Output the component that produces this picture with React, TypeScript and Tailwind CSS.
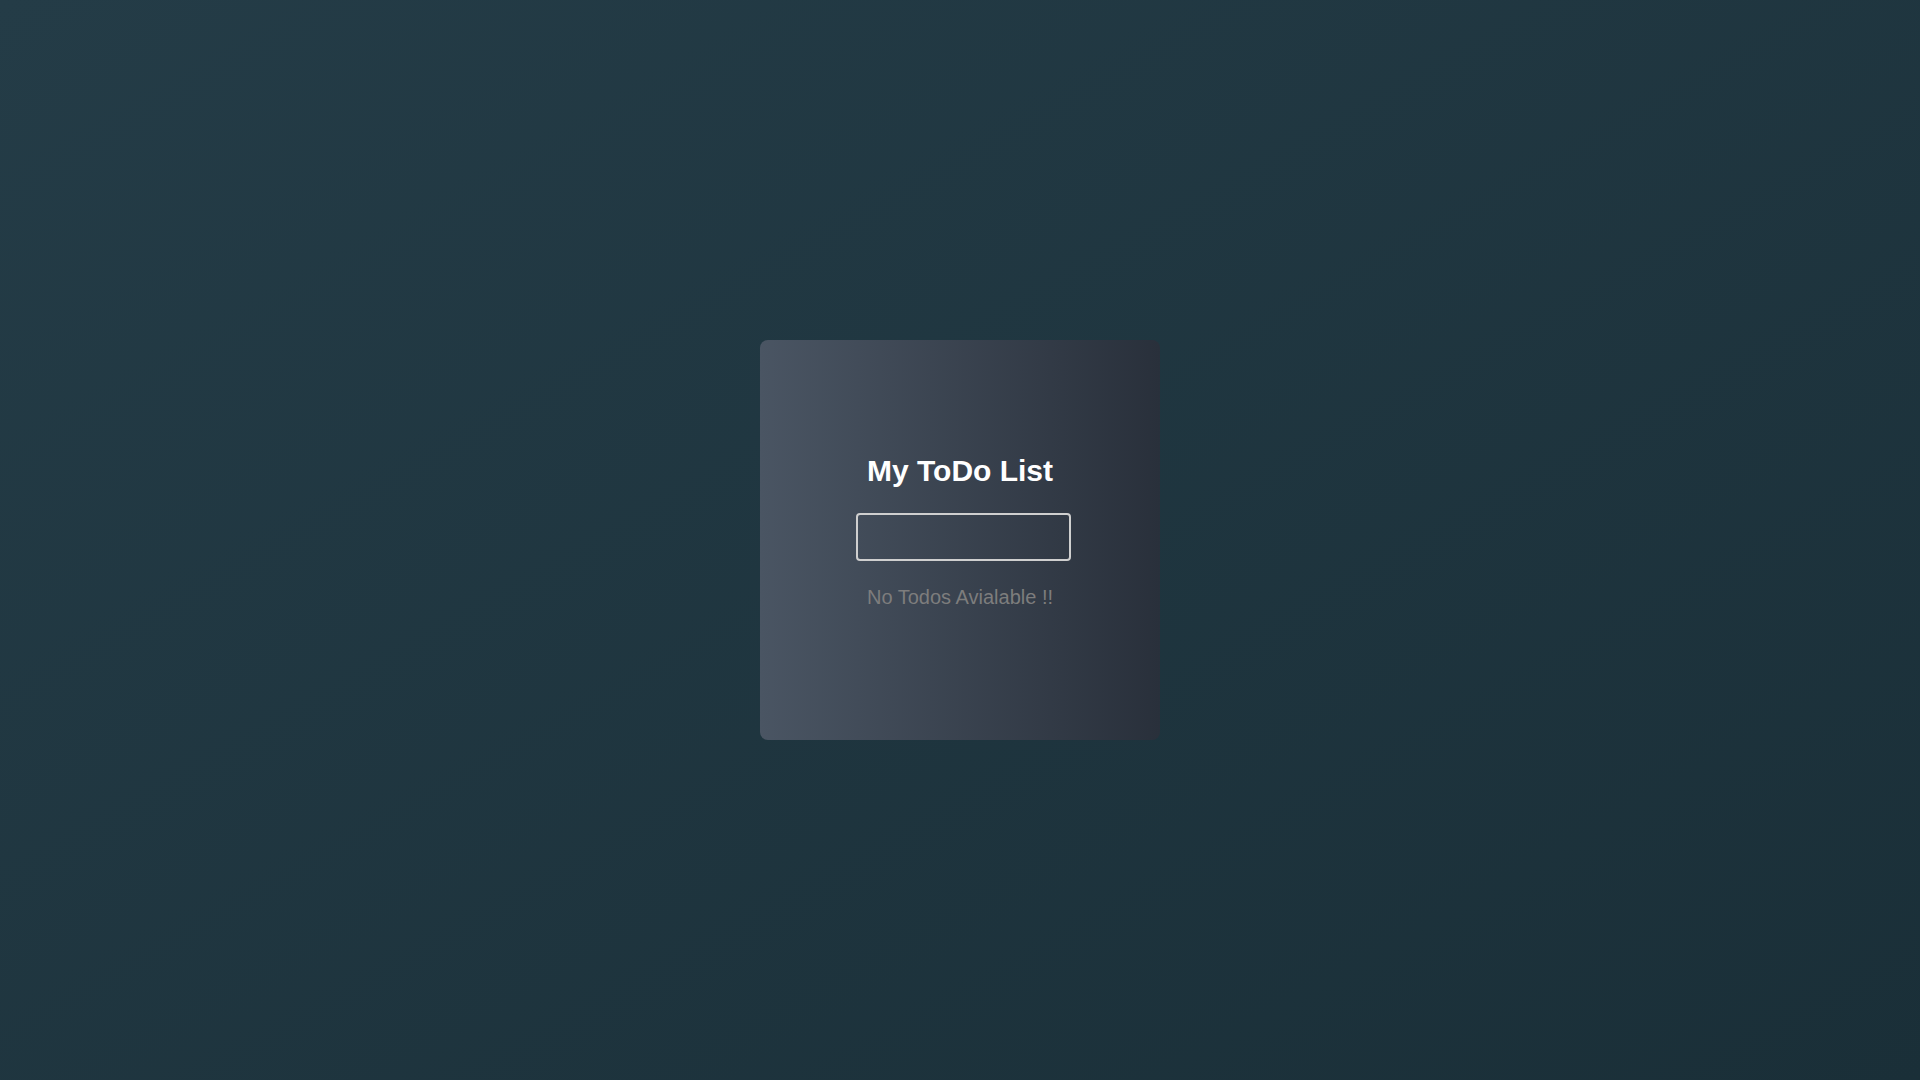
export default function App() {
  return (
    <main className="w-full min-h-screen flex items-center justify-center bg-[linear-gradient(to_bottom_right,#243c47,#1a2f38)] font-['Liberation_Sans',Arial,sans-serif]">
      {/* Карточка */}
      <div className="w-[400px] h-[400px] rounded-lg bg-[linear-gradient(to_right,#4a5563,#29303b)] flex flex-col items-center pt-[114px]">
        <h1 className="text-[30px] leading-[34px] font-bold text-white">My ToDo List</h1>
        <div className="mt-[25px] pl-[7px]">
          <input
            type="text"
            className="w-[215px] h-[48px] rounded-[4px] border-2 border-[#cfcfcf] bg-transparent px-2 text-white outline-none"
          />
        </div>
        <p className="mt-[25px] text-[20px] leading-[23px] text-[#7d7d7d]">No Todos Avialable !!</p>
      </div>
    </main>
  );
}
